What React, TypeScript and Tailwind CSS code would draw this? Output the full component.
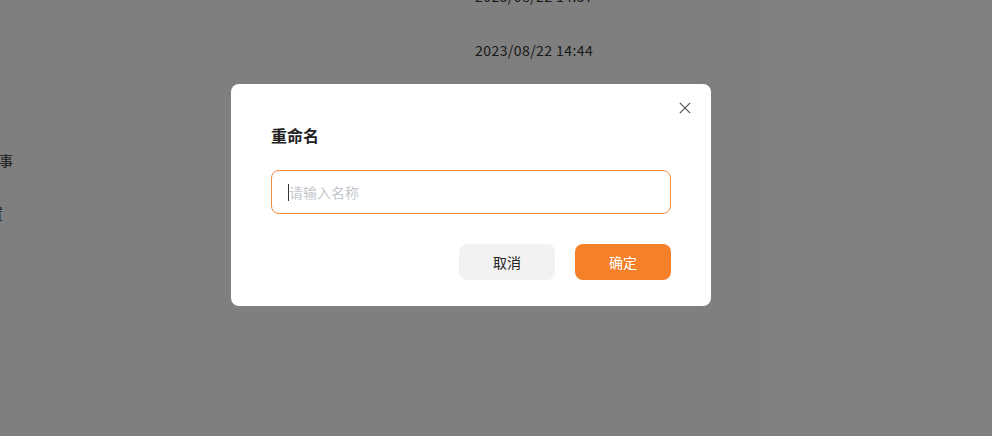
import React from "react";

export default function App() {
  const font = { fontFamily: '"Microsoft YaHei", "Noto Sans CJK SC", "Noto Sans", sans-serif' };
  return (
    <div className="relative w-[992px] h-[436px] overflow-hidden bg-white" style={font}>
      {/* page behind */}
      <div className="flex h-full">
        <div className="w-[230px] ml-[-40px] flex flex-col text-[14px] text-[#333]">
          <div className="h-[150px]" />
          <div className="h-[20px] leading-[20px] text-right pr-[177px]">故事</div>
          <div className="h-[33px]" />
          <div className="h-[20px] leading-[20px] text-right pr-[187px]">设置</div>
        </div>
        <div className="flex flex-col pl-[285px] text-[14px] tracking-[0.44px] text-[#333]">
          <div className="mt-[-14px] h-[20px] leading-[20px]">2023/08/22 14:37</div>
          <div className="mt-[34px] h-[20px] leading-[20px]">2023/08/22 14:44</div>
        </div>
      </div>

      {/* overlay */}
      <div className="absolute inset-0 bg-black/50" />

      {/* dialog */}
      <div className="absolute left-[231px] top-[84px] w-[480px] h-[222px] bg-white rounded-[8px] px-10 pt-[40px]">
        <button className="absolute right-[20px] top-[18px] w-[12px] h-[12px] flex items-center justify-center">
          <svg width="14" height="14" viewBox="0 0 14 14" fill="none" stroke="#555" strokeWidth="1.4">
            <path d="M1 1L13 13M13 1L1 13" />
          </svg>
        </button>
        <div className="text-[16px] font-bold leading-[22px] text-[#222]">重命名</div>
        <div className="mt-[24px] h-[44px] border border-[#ef8a3f] rounded-[8px] flex items-center pl-[16px]">
          <span className="w-px h-[17px] bg-[#333]" />
          <span className="text-[14px] text-[#c4c6cc]">请输入名称</span>
        </div>
        <div className="mt-[30px] flex justify-end gap-5">
          <button className="w-[96px] h-[36px] rounded-[8px] bg-[#f2f2f2] text-[14px] text-[#222]">取消</button>
          <button className="w-[96px] h-[36px] rounded-[8px] bg-[#f5802a] text-[14px] text-white">确定</button>
        </div>
      </div>
    </div>
  );
}
